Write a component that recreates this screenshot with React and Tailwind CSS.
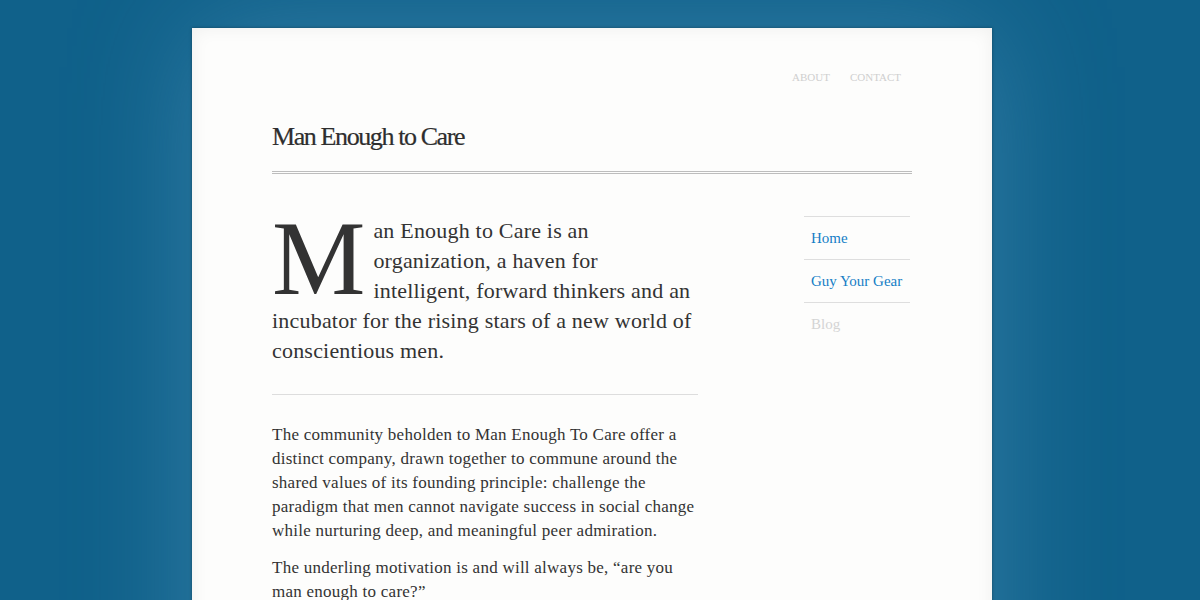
import React from 'react';

const SERIF = { fontFamily: '"Liberation Serif", "Times New Roman", serif' };

const NAV = ['About', 'Contact'];

const SIDE_LINKS = [
  { label: 'Home', active: true },
  { label: 'Guy Your Gear', active: true },
  { label: 'Blog', active: false },
];

const Sidebar = () => (
  <ul className="w-[106px] text-[15px]">
    {SIDE_LINKS.map((link) => (
      <li key={link.label} className="h-[43px] flex items-center pl-[7px] border-t border-[#dedede]">
        <a className={link.active ? 'text-[#157ec6]' : 'text-[#d4d4d4]'}>{link.label}</a>
      </li>
    ))}
  </ul>
);

const App = () => {
  return (
    <div className="h-[600px] overflow-hidden bg-[#10618a] pt-[28px]" style={SERIF}>
      <div className="ml-[192px] w-[800px] h-[700px] bg-[#fdfdfc] px-[80px] shadow-[0_0_3px_rgba(0,0,0,0.35),0_0_110px_rgba(90,160,200,0.45),inset_0_0_18px_rgba(0,0,0,0.06)]">
        {/* Top nav */}
        <nav className="flex justify-end gap-[20px] pr-[11px] pt-[43px] text-[11px] uppercase text-[#cfcfcf] leading-[12px]">
          {NAV.map((n) => (
            <a key={n}>{n}</a>
          ))}
        </nav>

        {/* Masthead */}
        <header className="pt-[38px] pb-[18px] border-b-[3px] border-double border-[#bdbdbd]">
          <h1 className="text-[26px] leading-[32px] tracking-[-1.4px] text-[#2e2e2e] [-webkit-text-stroke:0.2px_#2e2e2e]">
            Man Enough to Care
          </h1>
        </header>

        <div className="flex justify-between pt-[42px]">
          <main className="w-[426px] text-[#333]">
            <p className="text-[22px] leading-[30px] tracking-[0.2px]">
              <span className="float-left text-[105px] leading-[82px] mt-[2px] mr-[8px] tracking-normal">M</span>
              an Enough to Care is an organization, a haven for intelligent, forward thinkers and an incubator for the rising stars of a new world of conscientious men.
            </p>
            <hr className="mt-[28px] border-0 border-t border-[#dddddd]" />
            <div className="pt-[28px] text-[17px] leading-[24px] tracking-[0.25px]">
              <p className="mb-[13px]">
                The community beholden to Man Enough To Care offer a distinct company, drawn together to commune around the shared values of its founding principle: challenge the paradigm that men cannot navigate success in social change while nurturing deep, and meaningful peer admiration.
              </p>
              <p>The underling motivation is and will always be, “are you man enough to care?”</p>
            </div>
          </main>
          <aside className="mr-[2px]">
            <Sidebar />
          </aside>
        </div>
      </div>
    </div>
  );
};

export default App;
